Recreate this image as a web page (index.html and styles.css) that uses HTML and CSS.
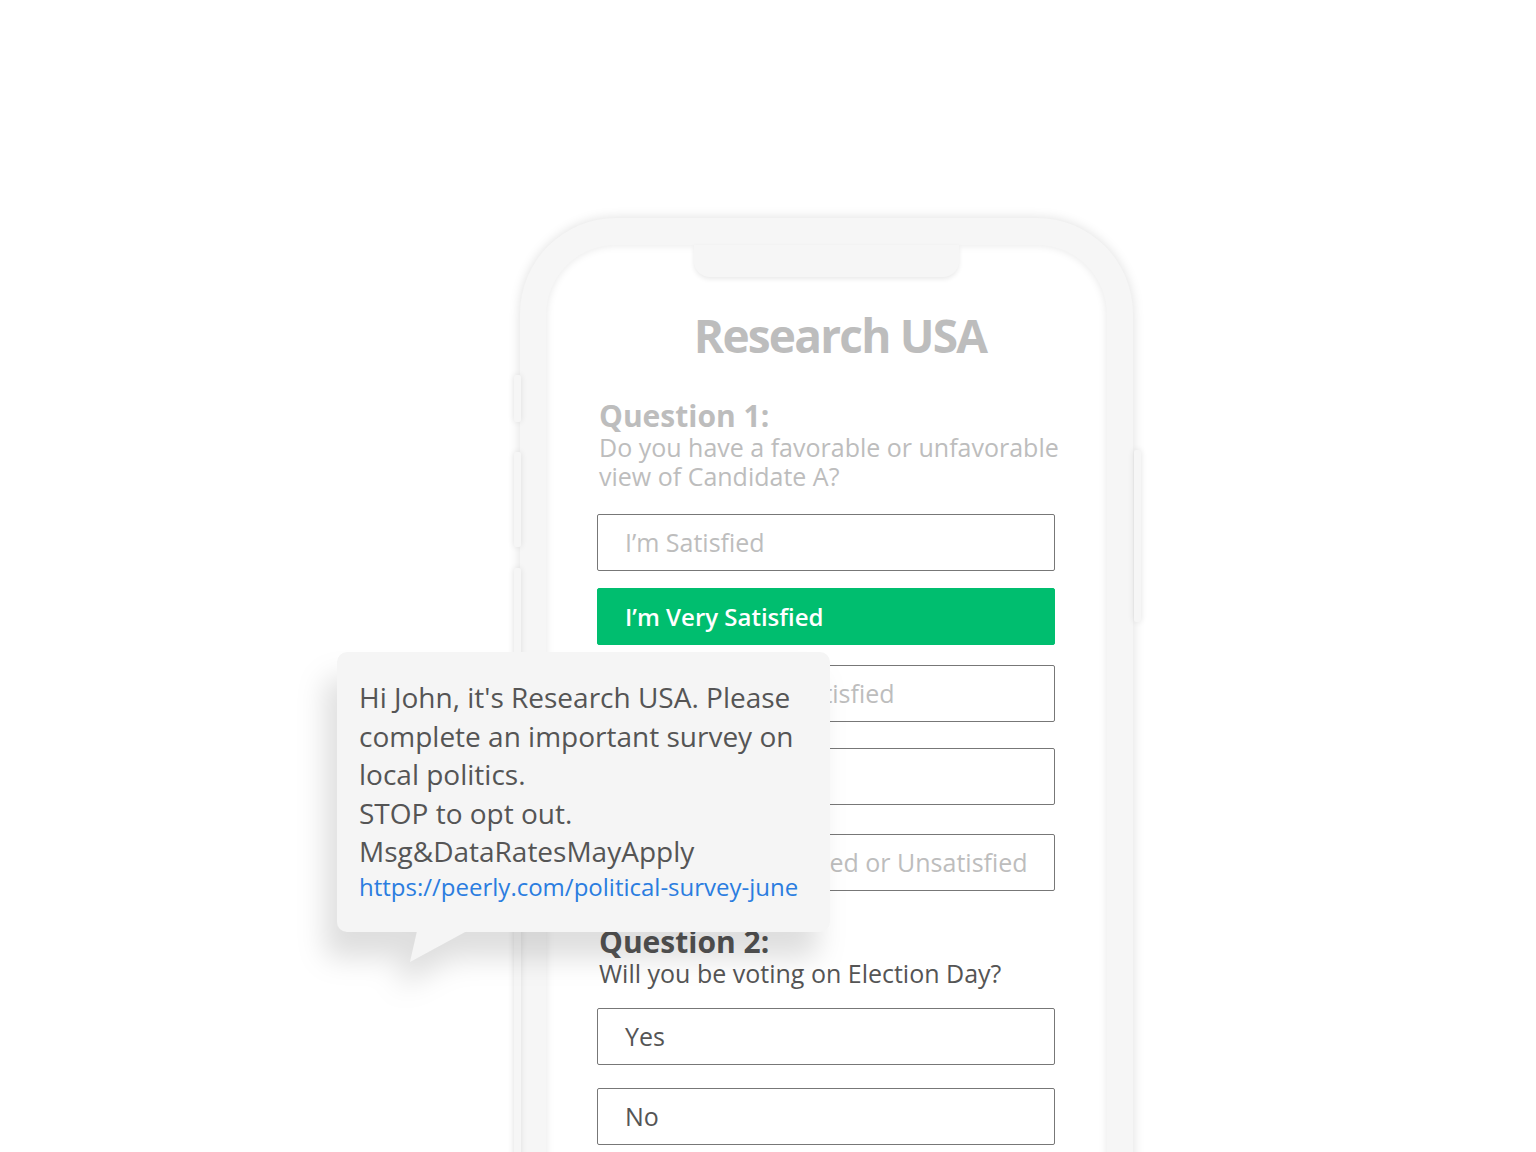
FILE: index.html
```html
<!DOCTYPE html>
<html lang="en">
<head>
    <meta charset="UTF-8">
    <meta name="viewport" content="width=device-width, initial-scale=1.0">
    <title>Research USA Survey</title>
    <link rel="stylesheet" href="styles.css">
</head>
<body>
    <div class="stage">
        <div class="phone">
            <span class="side-btn btn-mute"></span>
            <span class="side-btn btn-vol-up"></span>
            <span class="side-btn btn-vol-down"></span>
            <span class="side-btn btn-power"></span>

            <div class="screen">
                <div class="notch"></div>

                <h1 class="brand">Research USA</h1>

                <section class="question muted">
                    <h2>Question 1:</h2>
                    <p>Do you have a favorable or unfavorable view of Candidate A?</p>
                    <ul class="options">
                        <li class="option">I’m Satisfied</li>
                        <li class="option selected">I’m Very Satisfied</li>
                        <li class="option">I’m Somewhat Satisfied</li>
                        <li class="option">I’m Dissatisfied</li>
                        <li class="option">I’m Neither Satisfied or Unsatisfied</li>
                    </ul>
                </section>

                <section class="question second">
                    <h2>Question 2:</h2>
                    <p>Will you be voting on Election Day?</p>
                    <ul class="options">
                        <li class="option">Yes</li>
                        <li class="option">No</li>
                    </ul>
                </section>
            </div>
        </div>

        <!-- SMS preview bubble -->
        <div class="bubble">
            <p>Hi John, it's Research USA. Please complete an important survey on local politics.<br>
            STOP to opt out.<br>
            Msg&amp;DataRatesMayApply</p>
            <a href="#">https://peerly.com/political-survey-june</a>
        </div>
    </div>
</body>
</html>
```

FILE: styles.css
```css
body {
    margin: 0;
    padding: 0;
    background-color: #fff;
    font-family: "Open Sans", "Noto Sans", sans-serif;
}

.stage {
    position: relative;
    height: 1152px;
    overflow: hidden;
}

/* phone frame */
.phone {
    position: relative;
    width: 561px;
    height: 1000px;
    margin: 218px 0 0 520px;
    padding: 27px 26px 0 26px;
    background-color: #f6f6f6;
    border-radius: 96px 96px 0 0;
    box-shadow: 0 0 12px rgba(0, 0, 0, 0.13);
}

.side-btn {
    position: absolute;
    width: 7px;
    background-color: #f6f6f6;
    border-radius: 2px;
    box-shadow: 0 0 6px rgba(0, 0, 0, 0.1);
}

.btn-mute { left: -6px; top: 157px; height: 47px; }
.btn-vol-up { left: -6px; top: 234px; height: 95px; }
.btn-vol-down { left: -6px; top: 350px; height: 600px; }
.btn-power { right: -8px; top: 232px; height: 172px; }

.screen {
    position: relative;
    height: 100%;
    box-sizing: border-box;
    padding: 0 52px 0 51px;
    background-color: #fff;
    border-radius: 70px 70px 0 0;
    box-shadow: inset 0 0 9px rgba(0, 0, 0, 0.1);
}

.notch {
    position: absolute;
    top: 0;
    left: 148px;
    width: 265px;
    height: 32px;
    background-color: #f6f6f6;
    border-radius: 0 0 16px 16px;
    box-shadow: 0 2px 5px rgba(0, 0, 0, 0.09);
}

.brand {
    margin: 0;
    padding: 60px 0 0 28px;
    text-align: center;
    font-size: 46px;
    line-height: 60px;
    font-weight: 700;
    font-stretch: 93%;
    letter-spacing: -1.8px;
    color: #bdbdbd;
}

.question {
    margin-top: 34px;
    color: #555;
}

.question.muted {
    color: #bdbdbd;
}

.question h2 {
    margin: 0 0 0 2px;
    font-size: 30px;
    line-height: 34px;
    font-weight: 700;
}

.question p {
    margin: 0 -12px 0 2px;
    font-size: 25px;
    line-height: 29px;
    font-stretch: 90%;
}

.options {
    list-style-type: none;
    margin: 23px 0 0 0;
    padding: 0;
}

.option {
    height: 55px;
    margin-top: 23px;
    padding-left: 27px;
    border: 1px solid #777;
    border-radius: 2px;
    font-size: 25px;
    line-height: 55px;
    font-stretch: 90%;
    white-space: nowrap;
}

.option:first-child {
    margin-top: 0;
}

.muted .option:nth-child(2) { margin-top: 17px; }
.muted .option:nth-child(3) { margin-top: 20px; }
.muted .option:nth-child(4) { margin-top: 26px; }
.muted .option:nth-child(5) { margin-top: 29px; }

.option.selected {
    border-color: #00be6f;
    background-color: #00be6f;
    color: #fff;
    font-size: 24px;
    font-weight: 600;
}

.question.second {
    margin-top: 34px;
}

.second .options {
    margin-top: 20px;
}

/* sms bubble */
.bubble {
    position: absolute;
    left: 337px;
    top: 652px;
    width: 471px;
    height: 280px;
    padding: 0 0 0 22px;
    background-color: #f5f5f5;
    border-radius: 10px;
    color: #555;
    filter: drop-shadow(-12px 26px 14px rgba(0, 0, 0, 0.13));
}

.bubble::after {
    content: "";
    position: absolute;
    top: 279px;
    left: 73px;
    width: 57px;
    height: 32px;
    background-color: #f5f5f5;
    clip-path: polygon(7px 0, 57px 0, 0 31px);
}

.bubble p {
    margin: 0;
    padding-top: 26px;
    font-size: 28px;
    line-height: 38.5px;
}

.bubble a {
    display: block;
    color: #2b7de0;
    font-size: 24px;
    line-height: 32px;
    text-decoration: none;
}
```
